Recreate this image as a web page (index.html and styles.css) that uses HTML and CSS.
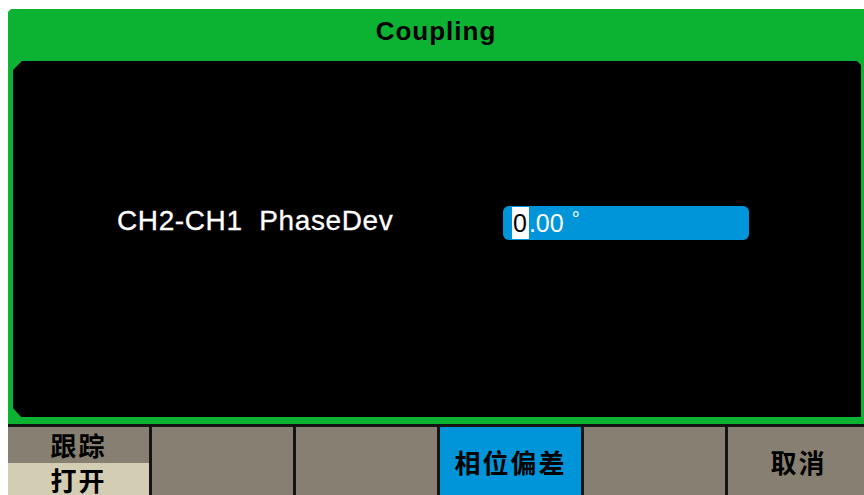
FILE: index.html
```html
<!DOCTYPE html>
<html lang="en">
<head>
    <meta charset="UTF-8">
    <meta name="viewport" content="width=device-width, initial-scale=1.0">
    <title>Coupling</title>
    <link rel="stylesheet" href="styles.css">
</head>
<body>
    <div class="screen">
        <div class="title">Coupling</div>
        <div class="panel">
            <div class="row">
                <span class="label">CH2-CH1&nbsp; PhaseDev</span>
                <div class="field">
                    <span class="cursor">0</span><span class="value">.00</span><span class="unit">°</span>
                </div>
            </div>
        </div>
    </div>
    <div class="menu">
        <div class="key split">
            <span class="top">跟踪</span>
            <span class="bottom">打开</span>
        </div>
        <div class="key"></div>
        <div class="key"></div>
        <div class="key active">相位偏差</div>
        <div class="key"></div>
        <div class="key">取消</div>
    </div>
</body>
</html>
```

FILE: styles.css
```css
html, body {
    margin: 0;
    height: 495px;
    overflow: hidden;
}
body {
    background: #fff;
    padding: 9px 0 0 8px;
    box-sizing: border-box;
    width: 864px;
}
.screen {
    width: 856px;
    background: #0cb232;
    clip-path: polygon(3px 0, 100% 0, 100% 100%, 0 100%, 0 3px);
}
.title {
    height: 52px;
    display: flex;
    align-items: center;
    justify-content: center;
    font: bold 26px "Liberation Sans", Arial, sans-serif;
    letter-spacing: 1px;
    color: #000;
    padding-bottom: 8px;
    box-sizing: border-box;
}
.panel {
    margin: 0 3px 0 5px;
    height: 356px;
    background: #000;
    clip-path: polygon(9px 0, calc(100% - 4px) 0, 100% 4px, 100% 100%, 8px 100%, 0 calc(100% - 9px), 0 9px);
    padding: 144px 0 0 104px;
    box-sizing: border-box;
}
.screen::after {
    content: "";
    display: block;
    height: 7px;
}
.row {
    display: flex;
    align-items: center;
}
.label {
    width: 386px;
    color: #fff;
    font: 28px "Liberation Sans", Arial, sans-serif;
    letter-spacing: 0.6px;
    -webkit-text-stroke: 0.3px #fff;
    padding-bottom: 4px;
}
.field {
    width: 246px;
    height: 34px;
    background: #0095d9;
    border-radius: 6px;
    display: flex;
    align-items: center;
    padding-left: 9px;
    box-sizing: border-box;
    font: 25px "Liberation Sans", Arial, sans-serif;
    color: #fff;
}
.cursor {
    background: #fff;
    color: #000;
    height: 32px;
    line-height: 32px;
    padding: 0 2px 0 1px;
}
.value {
    line-height: 32px;
}
.unit {
    font-size: 20px;
    line-height: 20px;
    align-self: flex-start;
    margin: 3px 0 0 8px;
}
.menu {
    width: 861px;
    display: grid;
    grid-template-columns: repeat(6, 141px);
    gap: 3px;
    background: #141414;
    padding-top: 3px;
}
.key {
    height: 68px;
    background: #878072;
    display: flex;
    align-items: center;
    justify-content: center;
    font: bold 26px "Noto Sans CJK SC", sans-serif;
    letter-spacing: 2px;
    color: #000;
}
.key.active {
    background: #0095d9;
}
.key.split {
    flex-direction: column;
    align-items: stretch;
}
.split span {
    display: flex;
    justify-content: center;
    align-items: center;
    line-height: 1;
}
.split .top {
    height: 36px;
}
.split .bottom {
    flex: 1;
    background: #d3cdb3;
    padding-top: 2px;
}
```
